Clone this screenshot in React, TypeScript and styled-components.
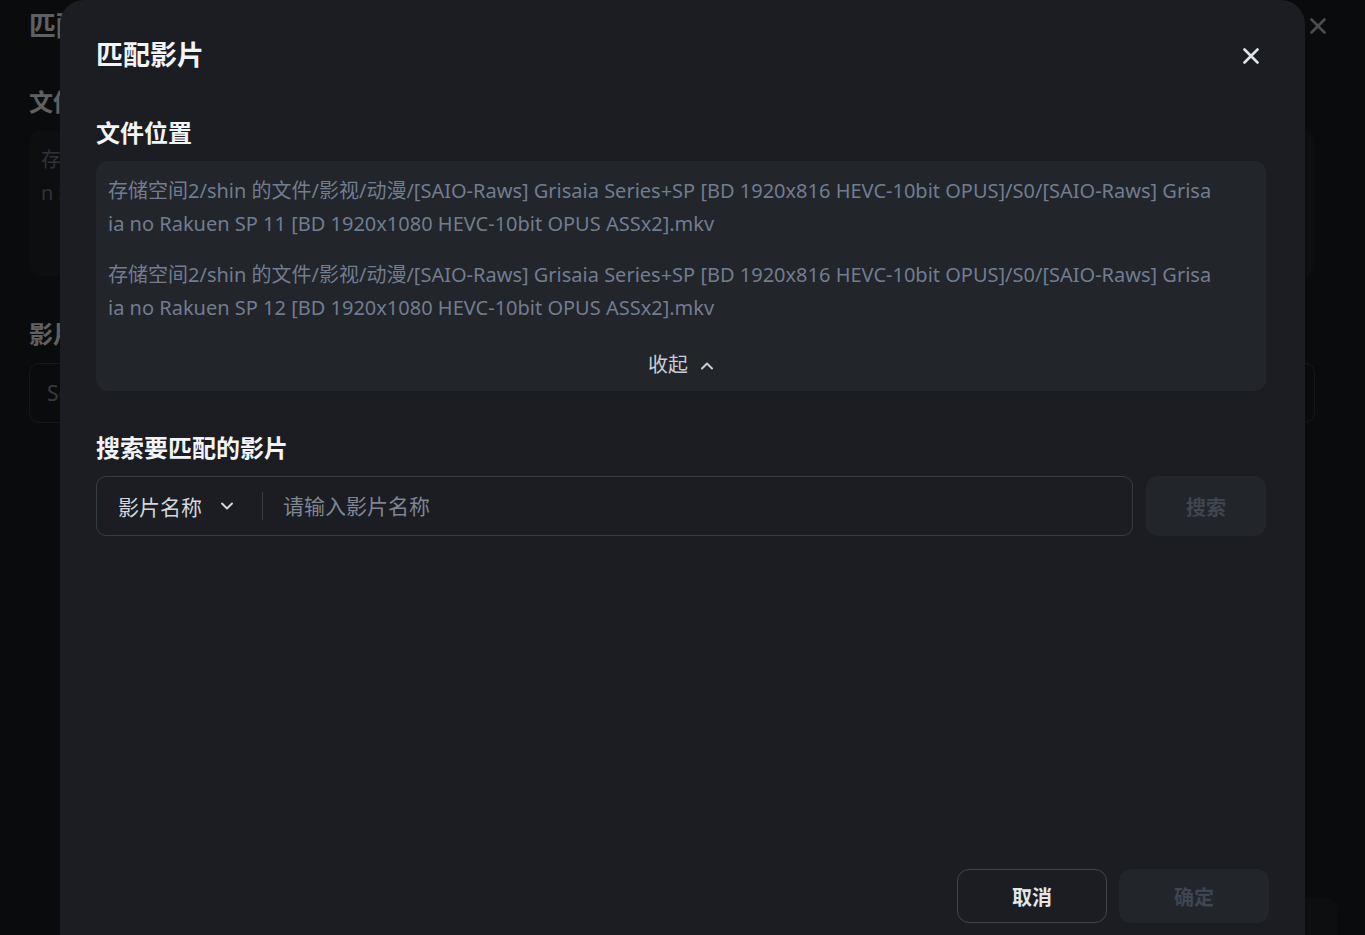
import React from "react";
import styled, { createGlobalStyle } from "styled-components";

const GlobalStyle = createGlobalStyle`
  html, body { margin: 0; padding: 0; }
  body {
    background: #1b1d22;
    font-family: "Noto Sans", "Noto Sans CJK SC", sans-serif;
    color: #eef0f3;
    overflow: hidden;
  }
  * { box-sizing: border-box; }
`;

/* ---------- background page (behind the dialog) ---------- */
const Page = styled.div`
  position: relative;
  height: 935px;
  padding: 0 50px 0 29px;
  display: flex;
  flex-direction: column;
`;

const PageTitle = styled.h1`
  margin: 8px 0 0;
  font-size: 27px;
  line-height: 36px;
  font-weight: 700;
  color: #eef0f3;
`;

const PageClose = styled.button`
  position: absolute;
  top: 18px;
  right: 39px;
  width: 16px;
  height: 16px;
  padding: 0;
  border: 0;
  background: none;
  color: #b8bec7;
  display: flex;
`;

const PageSection = styled.h2`
  margin: 42px 0 0;
  font-size: 24px;
  line-height: 32px;
  font-weight: 700;
  color: #eef0f3;
`;

const PageBox = styled.div`
  margin-top: 13px;
  height: 145px;
  border-radius: 12px;
  background: #22252a;
  padding: 12px 60px 12px 12px;
  font-size: 20px;
  line-height: 33px;
  color: #717d8f;
  word-break: break-all;
  overflow: hidden;
`;

const PageInput = styled.div`
  margin-top: 13px;
  height: 60px;
  border: 1px solid #363c44;
  border-radius: 10px;
  display: flex;
  align-items: center;
  padding-left: 17px;
  font-size: 21px;
  color: #8a9099;
`;

const PageFooter = styled.div`
  margin-top: auto;
  margin-right: -22px;
  display: flex;
  justify-content: flex-end;
  gap: 12px;
  transform: translateY(17px);
`;

/* ---------- overlay + dialog ---------- */
const Backdrop = styled.div`
  position: fixed;
  inset: 0;
  background: rgba(0, 0, 0, 0.6);
`;

const Dialog = styled.section`
  position: fixed;
  left: 60px;
  top: 0;
  width: 1245px;
  height: 935px;
  background: #1b1d22;
  border-radius: 24px 24px 0 0;
  padding: 37px 39px 12px 36px;
  display: flex;
  flex-direction: column;
`;

const Header = styled.header`
  display: flex;
  align-items: center;
  justify-content: space-between;
  height: 36px;
`;

const Title = styled.h1`
  margin: 0;
  font-size: 27px;
  line-height: 36px;
  font-weight: 700;
  color: #f2f4f7;
`;

const CloseButton = styled.button`
  width: 18px;
  height: 18px;
  margin: 2px 6px 0 0;
  padding: 0;
  border: 0;
  background: none;
  color: #dfe3ea;
  display: flex;
  align-items: center;
  justify-content: center;
  cursor: pointer;
`;

const SectionTitle = styled.h2<{ $gap: number }>`
  margin: ${(p) => p.$gap}px 0 0;
  font-size: 24px;
  line-height: 32px;
  font-weight: 700;
  color: #f2f4f7;
`;

const PathBox = styled.div`
  margin-top: 12px;
  border-radius: 12px;
  background: #22252a;
  padding: 13px 12px 12px;
  display: flex;
  flex-direction: column;
`;

const PathList = styled.div`
  padding-right: 41px;
  display: flex;
  flex-direction: column;
  gap: 18px;
`;

const PathItem = styled.p`
  margin: 0;
  font-size: 20px;
  line-height: 33px;
  color: #717d8f;
  word-break: break-all;
`;

const Collapse = styled.button`
  margin: 27px 0 0;
  align-self: center;
  padding: 0;
  border: 0;
  background: none;
  display: flex;
  align-items: center;
  gap: 12px;
  font-family: inherit;
  font-size: 20px;
  line-height: 28px;
  color: #c9ced6;
  cursor: pointer;
`;

const SearchRow = styled.div`
  margin-top: 12px;
  display: flex;
  gap: 13px;
  height: 60px;
`;

const InputGroup = styled.div`
  flex: 1;
  display: flex;
  align-items: center;
  border: 1px solid #363c44;
  border-radius: 10px;
  padding-left: 21px;
`;

const SelectTrigger = styled.div`
  display: flex;
  align-items: center;
  gap: 18px;
  font-size: 21px;
  color: #d3d7dd;
  padding-right: 28px;
`;

const Divider = styled.span`
  width: 1px;
  height: 28px;
  background: #363c44;
`;

const SearchInput = styled.input`
  flex: 1;
  height: 100%;
  margin-left: 18px;
  border: 0;
  outline: none;
  background: transparent;
  font-family: inherit;
  font-size: 21px;
  color: #d3d7dd;
  &::placeholder { color: #7f8690; }
`;

const Button = styled.button<{ $variant: "outline" | "disabled" }>`
  width: 150px;
  height: 54px;
  border-radius: 12px;
  font-family: inherit;
  font-size: 20px;
  font-weight: 700;
  border: 1px solid ${(p) => (p.$variant === "outline" ? "#40464d" : "transparent")};
  background: ${(p) => (p.$variant === "outline" ? "transparent" : "#22252a")};
  color: ${(p) => (p.$variant === "outline" ? "#e3e7ec" : "#3f4650")};
`;

const SearchButton = styled(Button)`
  width: 120px;
  height: 60px;
`;

const Footer = styled.footer`
  margin-top: auto;
  margin-right: -3px;
  display: flex;
  justify-content: flex-end;
  gap: 12px;
`;

const XIcon = ({ size = 16, stroke = 2.6 }: { size?: number; stroke?: number }) => (
  <svg width={size} height={size} viewBox="0 0 16 16" fill="none">
    <path d="M1.5 1.5L14.5 14.5M14.5 1.5L1.5 14.5" stroke="currentColor" strokeWidth={stroke} strokeLinecap="round" />
  </svg>
);

const Chevron = ({ up }: { up?: boolean }) => (
  <svg width="14" height="9" viewBox="0 0 14 9" fill="none">
    <path
      d={up ? "M2 7.5L7 2.5L12 7.5" : "M2 1.5L7 6.5L12 1.5"}
      stroke="currentColor"
      strokeWidth="2"
      strokeLinecap="round"
      strokeLinejoin="round"
    />
  </svg>
);

const paths = [
  "存储空间2/shin 的文件/影视/动漫/[SAIO-Raws] Grisaia Series+SP [BD 1920x816 HEVC-10bit OPUS]/S0/[SAIO-Raws] Grisaia no Rakuen SP 11 [BD 1920x1080 HEVC-10bit OPUS ASSx2].mkv",
  "存储空间2/shin 的文件/影视/动漫/[SAIO-Raws] Grisaia Series+SP [BD 1920x816 HEVC-10bit OPUS]/S0/[SAIO-Raws] Grisaia no Rakuen SP 12 [BD 1920x1080 HEVC-10bit OPUS ASSx2].mkv",
];

export default function App() {
  return (
    <>
      <GlobalStyle />
      <Page>
        <PageTitle>匹配影片</PageTitle>
        <PageClose aria-label="关闭">
          <XIcon />
        </PageClose>
        <PageSection>文件位置</PageSection>
        <PageBox>{paths[0]}</PageBox>
        <PageSection>影片名称</PageSection>
        <PageInput>Search</PageInput>
        <PageFooter>
          <Button $variant="outline">取消</Button>
          <Button $variant="disabled">确定</Button>
        </PageFooter>
      </Page>
      <Backdrop />
      <Dialog role="dialog" aria-label="匹配影片">
        <Header>
          <Title>匹配影片</Title>
          <CloseButton aria-label="关闭">
            <XIcon />
          </CloseButton>
        </Header>
        <SectionTitle $gap={44}>文件位置</SectionTitle>
        <PathBox>
          <PathList>
            {paths.map((p) => (
              <PathItem key={p}>{p}</PathItem>
            ))}
          </PathList>
          <Collapse>
            收起
            <Chevron up />
          </Collapse>
        </PathBox>
        <SectionTitle $gap={41}>搜索要匹配的影片</SectionTitle>
        <SearchRow>
          <InputGroup>
            <SelectTrigger>
              影片名称
              <Chevron />
            </SelectTrigger>
            <Divider />
            <SearchInput placeholder="请输入影片名称" />
          </InputGroup>
          <SearchButton $variant="disabled">搜索</SearchButton>
        </SearchRow>
        <Footer>
          <Button $variant="outline">取消</Button>
          <Button $variant="disabled">确定</Button>
        </Footer>
      </Dialog>
    </>
  );
}
